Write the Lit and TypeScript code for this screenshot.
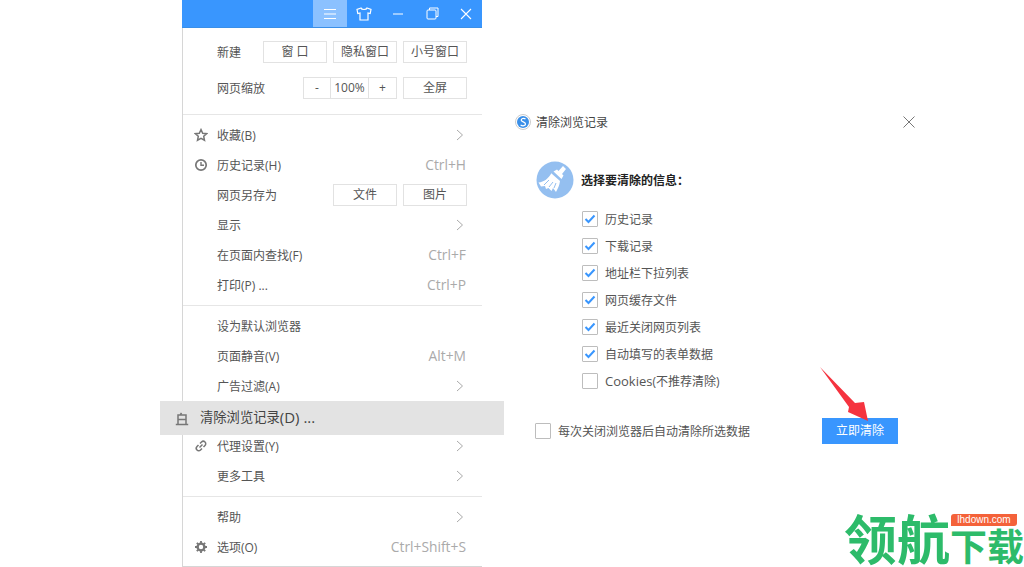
import { css, html, LitElement, svg } from 'lit';
import { customElement } from 'lit/decorators.js';

const chevron = svg`<svg class="chev" width="8" height="12" viewBox="0 0 8 12"><path d="M1 1l5.500 5-5.500 5" fill="none" stroke="#aaa" stroke-width="1"/></svg>`;

const icons: Record<string, unknown> = {
  star: svg`<svg width="14" height="14" viewBox="0 0 14 14"><path d="M7 1.600l1.700 3.600 3.900.5-2.900 2.600.8 3.900L7 10.300l-3.500 1.900.8-3.900L1.400 5.700l3.900-.5z" fill="none" stroke="#777" stroke-width="1.500"/></svg>`,
  clock: svg`<svg width="14" height="14" viewBox="0 0 14 14"><circle cx="7" cy="7" r="5.200" fill="none" stroke="#777" stroke-width="1.700"/><path d="M7 4v3.300h3" fill="none" stroke="#777" stroke-width="1.400"/></svg>`,
  link: svg`<svg width="14" height="14" viewBox="0 0 14 14"><path d="M6 4.500l1.500-1.500a2.300 2.300 0 0 1 3.500 3.500L9.500 8M8 9.500L6.500 11A2.300 2.300 0 0 1 3 7.500L4.500 6M5.500 8.500l3-3" fill="none" stroke="#777" stroke-width="1.500"/></svg>`,
  gear: svg`<svg width="14" height="14" viewBox="0 0 14 14"><circle cx="7" cy="7" r="3.400" fill="none" stroke="#777" stroke-width="2.400"/><path d="M7 1v2M7 11v2M1 7h2M11 7h2M2.800 2.800l1.400 1.400M9.800 9.800l1.400 1.400M2.800 11.200l1.400-1.400M9.800 4.200l1.400-1.400" stroke="#777" stroke-width="1.800"/></svg>`,
  eraser: svg`<svg width="14" height="14" viewBox="0 0 14 14"><path d="M6.500.8L5.500 2.500M3 12V3h8v9M3 7.500h8M.8 12.500h12.400" fill="none" stroke="#777" stroke-width="1.500"/></svg>`,
};

type Row = { icon?: string; label: string; keys?: string; more?: boolean; save?: boolean };

const groupA: Row[] = [
  { icon: 'star', label: '收藏(B)', more: true },
  { icon: 'clock', label: '历史记录(H)', keys: 'Ctrl+H' },
  { label: '网页另存为', save: true },
  { label: '显示', more: true },
  { label: '在页面内查找(F)', keys: 'Ctrl+F' },
  { label: '打印(P) ...', keys: 'Ctrl+P' },
];
const groupB: Row[] = [
  { label: '设为默认浏览器' },
  { label: '页面静音(V)', keys: 'Alt+M' },
  { label: '广告过滤(A)', more: true },
];
const groupC: Row[] = [
  { icon: 'link', label: '代理设置(Y)', more: true },
  { label: '更多工具', more: true },
];
const groupD: Row[] = [
  { label: '帮助', more: true },
  { icon: 'gear', label: '选项(O)', keys: 'Ctrl+Shift+S' },
];

const checks = [
  ['历史记录', true],
  ['下载记录', true],
  ['地址栏下拉列表', true],
  ['网页缓存文件', true],
  ['最近关闭网页列表', true],
  ['自动填写的表单数据', true],
] as const;

@customElement('app-root')
export class AppRoot extends LitElement {
  static styles = css`
    :host {
      display: flex;
      align-items: flex-start;
      position: relative;
      height: 567px;
      width: 1024px;
      overflow: hidden;
      background: #fff;
      font-family: 'Open Sans', 'Noto Sans CJK SC', sans-serif;
      font-size: 12px;
      line-height: 16px;
      color: #555;
    }
    .menu {
      margin-left: 182px;
      width: 300px;
      height: 567px;
      box-sizing: border-box;
      border-left: 1px solid #d6d6d6;
      border-bottom: 1px solid #d6d6d6;
      flex: none;
    }
    .bar {
      height: 28px;
      margin-left: -1px;
      box-sizing: border-box;
      background: #3996fe;
      border-bottom: 1px solid #3a8fe8;
      display: flex;
      justify-content: flex-end;
    }
    .bar div {
      width: 34px;
      height: 27px;
      display: flex;
      align-items: center;
      justify-content: center;
    }
    .bar div:last-child {
      width: 33px;
    }
    .bar .on {
      background: #8bc1ff;
    }
    .top {
      height: 87px;
      box-sizing: border-box;
      padding: 13px 15px 0 34px;
      display: flex;
      flex-direction: column;
      gap: 14px;
      border-bottom: 1px solid #e6e6e6;
    }
    .line {
      display: flex;
      align-items: center;
      height: 22px;
      gap: 6px;
    }
    .line .name {
      margin-right: auto;
      padding-top: 2px;
    }
    .btn {
      width: 64px;
      height: 22px;
      box-sizing: border-box;
      border: 1px solid #e2e2e2;
      display: flex;
      align-items: center;
      justify-content: center;
      color: #555;
    }
    .zoom {
      display: flex;
      width: 94px;
      height: 22px;
      box-sizing: border-box;
      border: 1px solid #e2e2e2;
    }
    .zoom span {
      display: flex;
      align-items: center;
      justify-content: center;
    }
    .zoom span:nth-child(1) {
      width: 26px;
    }
    .zoom span:nth-child(2) {
      width: 39px;
      box-sizing: border-box;
      border-left: 1px solid #e2e2e2;
      border-right: 1px solid #e2e2e2;
    }
    .zoom span:nth-child(3) {
      flex: 1;
    }
    .group {
      padding: 5px 0;
      border-bottom: 1px solid #e6e6e6;
    }
    .group.last {
      border-bottom: 0;
    }
    .row {
      height: 30px;
      display: flex;
      align-items: center;
      padding: 0 15px 0 34px;
      position: relative;
    }
    .ico {
      position: absolute;
      left: 11px;
      top: 8px;
      width: 14px;
      height: 14px;
    }
    .label {
      margin-right: auto;
      padding-top: 2px;
    }
    .keys {
      color: #aaa;
      font-size: 13.8px;
      margin-right: 1px;
    }
    .chev {
      margin-right: 3px;
    }
    .hover {
      position: relative;
      height: 34px;
      margin: 0 0 -4px -23px;
      width: 344px;
      background: #e3e3e3;
      display: flex;
      align-items: center;
      padding: 0 0 2px 40px;
      box-sizing: border-box;
      font-size: 13.3px;
      color: #444;
      z-index: 1;
    }
    .hover b {
      font-weight: 400;
      font-size: 15px;
      white-space: pre;
    }
    .hover .ico {
      left: 15px;
      top: 11px;
    }
    .dialog {
      margin-left: 33px;
      width: 400px;
      padding-top: 114px;
      flex: none;
    }
    .head {
      display: flex;
      align-items: center;
      justify-content: space-between;
      height: 16px;
      color: #444;
    }
    .head span {
      display: flex;
      align-items: center;
      gap: 5px;
    }
    .head em {
      font-style: normal;
      padding-top: 2px;
    }
    .intro {
      display: flex;
      align-items: center;
      gap: 7px;
      margin: 31px 0 6px 21px;
      font-weight: 700;
      color: #222;
    }
    .intro span {
      padding-top: 2px;
    }
    .list {
      margin-left: 67px;
    }
    .check {
      height: 27px;
      display: flex;
      align-items: center;
      gap: 7px;
      color: #555;
    }
    .check .txt {
      padding-top: 2px;
    }
    .latin {
      font-size: 13px;
    }
    .box {
      width: 16px;
      height: 16px;
      box-sizing: border-box;
      border: 1px solid #bdbdbd;
      border-radius: 1px;
      display: flex;
      align-items: center;
      justify-content: center;
      flex: none;
    }
    .foot {
      display: flex;
      align-items: center;
      justify-content: space-between;
      margin: 23px 17px 0 20px;
    }
    .go {
      width: 76px;
      height: 26px;
      background: #3996fe;
      color: #fff;
      display: flex;
      align-items: center;
      justify-content: center;
    }
    .arrow {
      position: absolute;
      left: 815px;
      top: 362px;
    }
    .mark {
      position: absolute;
      right: 0;
      bottom: 4px;
      display: flex;
      align-items: flex-end;
      color: #2dbb6a;
      font-weight: 700;
      white-space: nowrap;
      font-family: 'Noto Sans CJK SC', sans-serif;
    }
    .mark .big {
      font-size: 53px;
      line-height: 52px;
    }
    .mark .small {
      font-size: 37px;
      line-height: 36px;
    }
    .site {
      position: absolute;
      left: 951px;
      top: 514px;
      width: 66px;
      height: 12px;
      background: #f4623a;
      border-radius: 3px 0 3px 0;
      color: #fff;
      font-family: 'Liberation Sans', sans-serif;
      font-size: 10px;
      line-height: 12px;
      text-align: center;
    }
  `;

  private row(r: Row) {
    return html`<div class="row">
      ${r.icon ? html`<span class="ico">${icons[r.icon]}</span>` : ''}
      <span class="label">${r.label}</span>
      ${r.keys ? html`<span class="keys">${r.keys}</span>` : ''}
      ${r.more ? chevron : ''}
      ${r.save
        ? html`<div class="line"><div class="btn">文件</div><div class="btn">图片</div></div>`
        : ''}
    </div>`;
  }

  private box(on: boolean) {
    return html`<span class="box">
      ${on
        ? svg`<svg width="12" height="10" viewBox="0 0 12 10"><path d="M1.500 5l3 3 6-6.500" fill="none" stroke="#3996fe" stroke-width="2"/></svg>`
        : ''}
    </span>`;
  }

  render() {
    return html`
      <div class="menu">
        <div class="bar">
          <div class="on">
            <svg width="14" height="12" viewBox="0 0 14 12"><path d="M1 1.500h12M1 6h12M1 10.500h12" stroke="#fff"/></svg>
          </div>
          <div>
            <svg width="16" height="14" viewBox="0 0 16 14"><path d="M5 1L1 2.500l.8 4 2.200-.5v7h8V6l2.200.5.8-4L11 1c-.5 2-5.500 2-6 0z" fill="none" stroke="#fff" stroke-width="1.200"/></svg>
          </div>
          <div>
            <svg width="12" height="2" viewBox="0 0 12 2"><path d="M1 1h10" stroke="#fff"/></svg>
          </div>
          <div>
            <svg width="13" height="13" viewBox="0 0 13 13"><path d="M3.500 3V1h8.500v8.500H10" fill="none" stroke="#fff"/><rect x="1" y="3" width="9" height="9" rx="1" fill="none" stroke="#fff"/></svg>
          </div>
          <div>
            <svg width="12" height="12" viewBox="0 0 12 12"><path d="M1 1l10 10M11 1L1 11" stroke="#fff" stroke-width="1.100"/></svg>
          </div>
        </div>
        <div class="top">
          <div class="line">
            <span class="name">新建</span>
            <div class="btn">窗 口</div>
            <div class="btn">隐私窗口</div>
            <div class="btn">小号窗口</div>
          </div>
          <div class="line">
            <span class="name">网页缩放</span>
            <div class="zoom"><span>-</span><span>100%</span><span>+</span></div>
            <div class="btn">全屏</div>
          </div>
        </div>
        <div class="group">${groupA.map((r) => this.row(r))}</div>
        <div class="group">
          ${groupB.map((r) => this.row(r))}
          <div class="hover"><span class="ico">${icons.eraser}</span>清除浏览记录<b>(D) ...</b></div>
          ${groupC.map((r) => this.row(r))}
        </div>
        <div class="group last">${groupD.map((r) => this.row(r))}</div>
      </div>

      <div class="dialog">
        <div class="head">
          <span>
            <svg width="16" height="16" viewBox="0 0 16 16"><circle cx="8" cy="8" r="7.500" fill="#fff" stroke="#ccc"/><circle cx="8" cy="8" r="6" fill="#3a8fe8"/><path d="M10.500 4.800C8.500 3.800 6 4.500 6.300 6.300c.3 1.700 4.200 1.500 4.200 3.700 0 1.800-2.800 2.400-4.900 1" fill="none" stroke="#fff" stroke-width="1.300"/></svg>
            <em>清除浏览记录</em>
          </span>
          <svg width="12" height="12" viewBox="0 0 12 12"><path d="M.5.500l11 11M11.500.500l-11 11" stroke="#777"/></svg>
        </div>
        <div class="intro">
          <svg width="38" height="38" viewBox="0 0 38 38">
            <circle cx="19" cy="19" r="18.500" fill="#94bff0"/>
            <path d="M27 5l3 3-4 5 1.500 1.500-2 3.500-8-7.500 3.500-2 1.500 1.500z" fill="#fff"/>
            <path d="M15.500 12.500l8.500 7.500c-.5 4-2 7.500-4 11l-3-4-1.500 3-3-3-2.500 1-1-3-4 .5-2.500-4c5.500-.5 10-4 13-9.500z" fill="#fff"/>
            <path d="M13 19l-5 5M17 21l-4 5M20 22l-2 5" fill="none" stroke="#94bff0"/>
          </svg>
          <span>选择要清除的信息：</span>
        </div>
        <div class="list">
          ${checks.map(
            ([t, on]) => html`<div class="check">${this.box(on)}<span class="txt">${t}</span></div>`
          )}
          <div class="check">
            ${this.box(false)}<span class="txt"><span class="latin">Cookies</span>(不推荐清除)</span>
          </div>
        </div>
        <div class="foot">
          <div class="check">${this.box(false)}<span class="txt">每次关闭浏览器后自动清除所选数据</span></div>
          <div class="go">立即清除</div>
        </div>
      </div>

      <svg class="arrow" width="60" height="64" viewBox="815 362 60 64">
        <path d="M820 367L855 403l9-1 4 19-20-9 1-5z" fill="#f5333f"/>
      </svg>
      <div class="mark">
        <span class="big">领航</span><span class="small">下载</span>
      </div>
      <div class="site">lhdown.com</div>
    `;
  }
}
